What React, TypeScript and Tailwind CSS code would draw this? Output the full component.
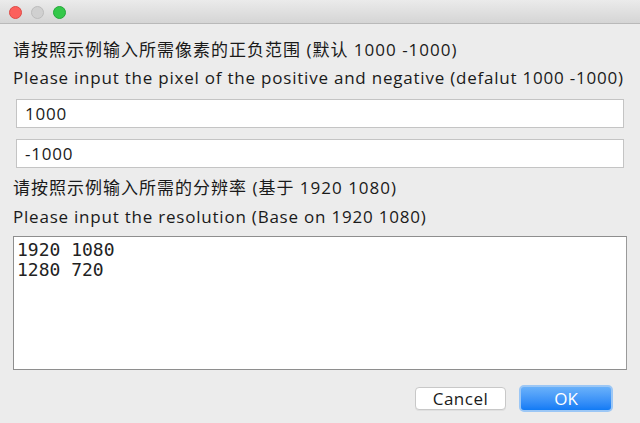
import React, { useState } from 'react';

const uiFont = { fontFamily: '"Open Sans", "Noto Sans CJK SC", sans-serif' };
const monoFont = { fontFamily: '"DejaVu Sans Mono", "Liberation Mono", monospace' };

const TrafficLight = ({ color, border }: { color: string; border: string }) => (
    <div className={`w-[13px] h-[13px] rounded-full border ${color} ${border}`} />
);

export default function App() {
    const [positive, setPositive] = useState('1000');
    const [negative, setNegative] = useState('-1000');
    const [resolutions, setResolutions] = useState('1920 1080\n1280 720');

    return (
        <div className="w-[640px] h-[423px] bg-[#ececec] flex flex-col overflow-hidden text-[#1a1a1a]" style={uiFont}>
            {/* Title bar */}
            <div className="h-[24px] shrink-0 bg-gradient-to-b from-[#ebebeb] to-[#d5d5d5] border-b border-[#b9b9b9] flex items-center gap-[9px] pl-[9px] pt-[1px]">
                <TrafficLight color="bg-[#fc605c]" border="border-[#de4a45]" />
                <TrafficLight color="bg-[#d0d0d0]" border="border-[#bcbcbc]" />
                <TrafficLight color="bg-[#34c84a]" border="border-[#24a83a]" />
            </div>

            <div className="flex flex-col flex-1 px-[13px]">
                <div className="text-[17px] leading-[20px] tracking-[1px] mt-[16px] whitespace-nowrap">
                    请按照示例输入所需像素的正负范围 (默认 1000 -1000)
                </div>
                <div className="text-[17px] leading-[20px] tracking-[0.78px] mt-[8px] whitespace-nowrap">
                    Please input the pixel of the positive and negative (defalut 1000 -1000)
                </div>

                <div className="px-[3px] mt-[11px] flex flex-col gap-[11px]">
                    <input
                        value={positive}
                        onChange={e => setPositive(e.target.value)}
                        className="h-[29px] w-full bg-white border border-[#c4c4c4] px-[8px] text-[17px] tracking-[0.8px] outline-none"
                        style={uiFont}
                    />
                    <input
                        value={negative}
                        onChange={e => setNegative(e.target.value)}
                        className="h-[29px] w-full bg-white border border-[#c4c4c4] px-[8px] text-[17px] tracking-[0.8px] outline-none"
                        style={uiFont}
                    />
                </div>

                <div className="text-[17px] leading-[20px] tracking-[1px] mt-[10px] whitespace-nowrap">
                    请按照示例输入所需的分辨率 (基于 1920 1080)
                </div>
                <div className="text-[17px] leading-[20px] tracking-[0.78px] mt-[9px] whitespace-nowrap">
                    Please input the resolution (Base on 1920 1080)
                </div>

                <textarea
                    value={resolutions}
                    onChange={e => setResolutions(e.target.value)}
                    className="mt-[9px] h-[134px] w-full resize-none bg-white border border-[#8e8e8e] border-r-[#9a9a9a] px-[3px] pt-[3px] text-[18px] leading-[20px] text-[#222] outline-none"
                    style={monoFont}
                />

                <div className="flex justify-end items-center gap-[13px] mt-[15px] pr-[14px]">
                    <button
                        className="w-[91px] h-[23px] bg-white border border-[#c8c8c8] rounded-[4px] text-[17px] tracking-[0.5px] leading-none shadow-[0_1px_0_rgba(0,0,0,0.05)]"
                        style={uiFont}
                    >
                        Cancel
                    </button>
                    <button
                        className="w-[94px] h-[27px] rounded-[5px] border-2 border-[#9cc7f5] bg-gradient-to-b from-[#69b1fa] to-[#0f7bf5] text-white text-[17px] leading-none"
                        style={uiFont}
                    >
                        OK
                    </button>
                </div>
            </div>
        </div>
    );
}
